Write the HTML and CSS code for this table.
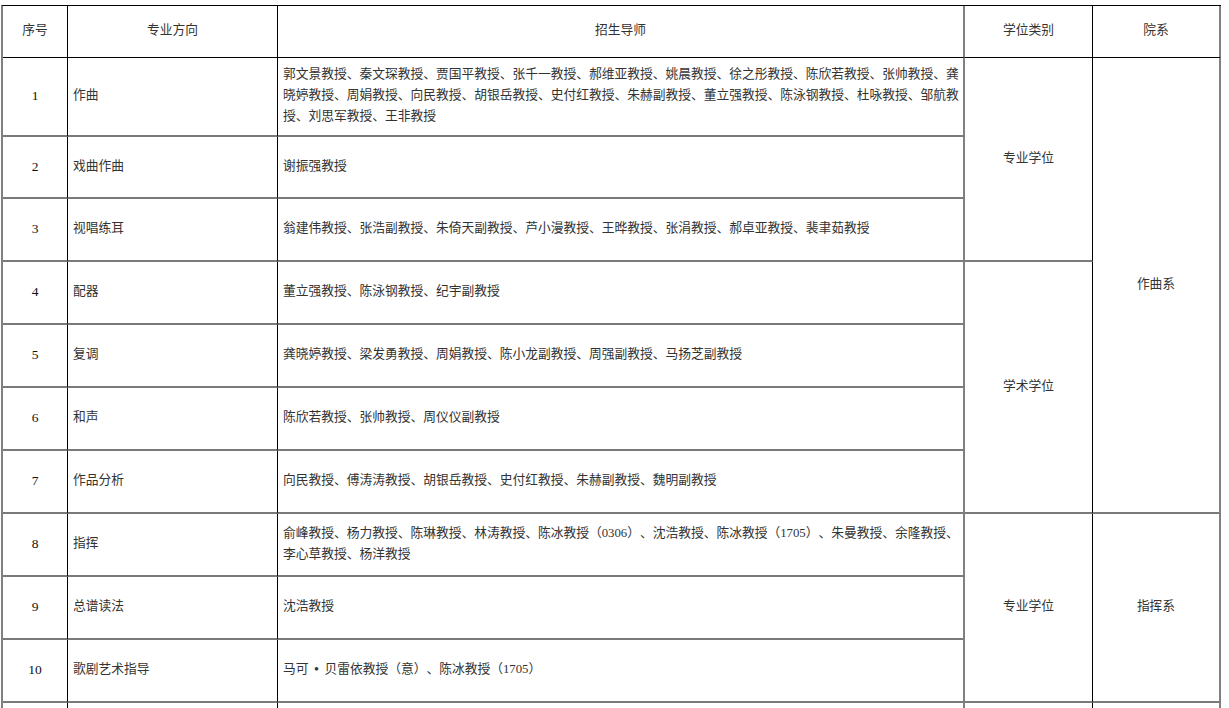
FILE: index.html
```html
<!DOCTYPE html>
<html lang="zh-CN">
<head>
<meta charset="utf-8">
<title>招生导师</title>
<link rel="stylesheet" href="styles.css">
</head>
<body>
<div class="page">
  <div class="grid">
    <div class="c c1 head center">序号</div>
    <div class="c c2 head center">专业方向</div>
    <div class="c c3 head center">招生导师</div>
    <div class="c c4 head center">学位类别</div>
    <div class="c c5 head center">院系</div>

    <div class="c c1 num center">1</div>
    <div class="c c2">作曲</div>
    <div class="c c3">郭文景教授、秦文琛教授、贾国平教授、张千一教授、郝维亚教授、姚晨教授、徐之彤教授、陈欣若教授、张帅教授、龚晓婷教授、周娟教授、向民教授、胡银岳教授、史付红教授、朱赫副教授、董立强教授、陈泳钢教授、杜咏教授、邹航教授、刘思军教授、王非教授</div>
    <div class="c c4 center span3">专业学位</div>
    <div class="c c5 center span7">作曲系</div>

    <div class="c c1 num center">2</div>
    <div class="c c2">戏曲作曲</div>
    <div class="c c3">谢振强教授</div>

    <div class="c c1 num center">3</div>
    <div class="c c2">视唱练耳</div>
    <div class="c c3">翁建伟教授、张浩副教授、朱倚天副教授、芦小漫教授、王晔教授、张涓教授、郝卓亚教授、裴聿茹教授</div>

    <div class="c c1 num center">4</div>
    <div class="c c2">配器</div>
    <div class="c c3">董立强教授、陈泳钢教授、纪宇副教授</div>
    <div class="c c4 center span4">学术学位</div>

    <div class="c c1 num center">5</div>
    <div class="c c2">复调</div>
    <div class="c c3">龚晓婷教授、梁发勇教授、周娟教授、陈小龙副教授、周强副教授、马扬芝副教授</div>

    <div class="c c1 num center">6</div>
    <div class="c c2">和声</div>
    <div class="c c3">陈欣若教授、张帅教授、周仪仪副教授</div>

    <div class="c c1 num center">7</div>
    <div class="c c2">作品分析</div>
    <div class="c c3">向民教授、傅涛涛教授、胡银岳教授、史付红教授、朱赫副教授、魏明副教授</div>

    <div class="c c1 num center">8</div>
    <div class="c c2">指挥</div>
    <div class="c c3">俞峰教授、杨力教授、陈琳教授、林涛教授、陈冰教授（0306）、沈浩教授、陈冰教授（1705）、朱曼教授、余隆教授、李心草教授、杨洋教授</div>
    <div class="c c4 center span3">专业学位</div>
    <div class="c c5 center span3">指挥系</div>

    <div class="c c1 num center">9</div>
    <div class="c c2">总谱读法</div>
    <div class="c c3">沈浩教授</div>

    <div class="c c1 num center">10</div>
    <div class="c c2">歌剧艺术指导</div>
    <div class="c c3">马可<span class="dot">•</span>贝雷依教授（意）、陈冰教授（1705）</div>

    <div class="c c1"></div>
    <div class="c c2"></div>
    <div class="c c3"></div>
    <div class="c c4"></div>
    <div class="c c5"></div>
  </div>
</div>
</body>
</html>
```
FILE: styles.css
```css
html, body {
  margin: 0;
  padding: 0;
  background: #fff;
}

body {
  font-family: "Liberation Serif", "Noto Sans CJK SC", serif;
  font-size: 12.75px;
  line-height: 21px;
  color: #333;
  overflow: hidden;
  text-spacing-trim: space-all;
}

.page {
  padding: 5px 0 0 1px;
}

.grid {
  display: grid;
  width: max-content;
  grid-template-columns: 65px 210px 687px 128px 128px;
  grid-template-rows: 52px 79px 62px repeat(9, 63px);
  border-left: 2px solid #808080;
  border-top: 1px solid #000;
}

.c {
  box-sizing: border-box;
  display: flex;
  align-items: center;
  padding: 0 2px 2px 5px;
  border-right: 1px solid #000;
  border-bottom: 2px solid #7a7a7a;
  overflow: hidden;
}

.c1 { grid-column: 1; }
.c2 { grid-column: 2; }
.c3 { grid-column: 3; border-right: 2px solid #808080; }
.c4 { grid-column: 4; }
.c5 { grid-column: 5; border-right: 2px solid #808080; }

.head {
  border-bottom: 1px solid #000;
}

.center {
  justify-content: center;
  text-align: center;
  padding-left: 2px;
}

.num {
  font-size: 13.5px;
  color: #111;
}

.dot {
  display: inline-block;
  width: 16px;
  text-align: center;
  font-weight: bold;
}

.span3 { grid-row: span 3; }
.span4 { grid-row: span 4; }
.span7 { grid-row: span 7; }
```
